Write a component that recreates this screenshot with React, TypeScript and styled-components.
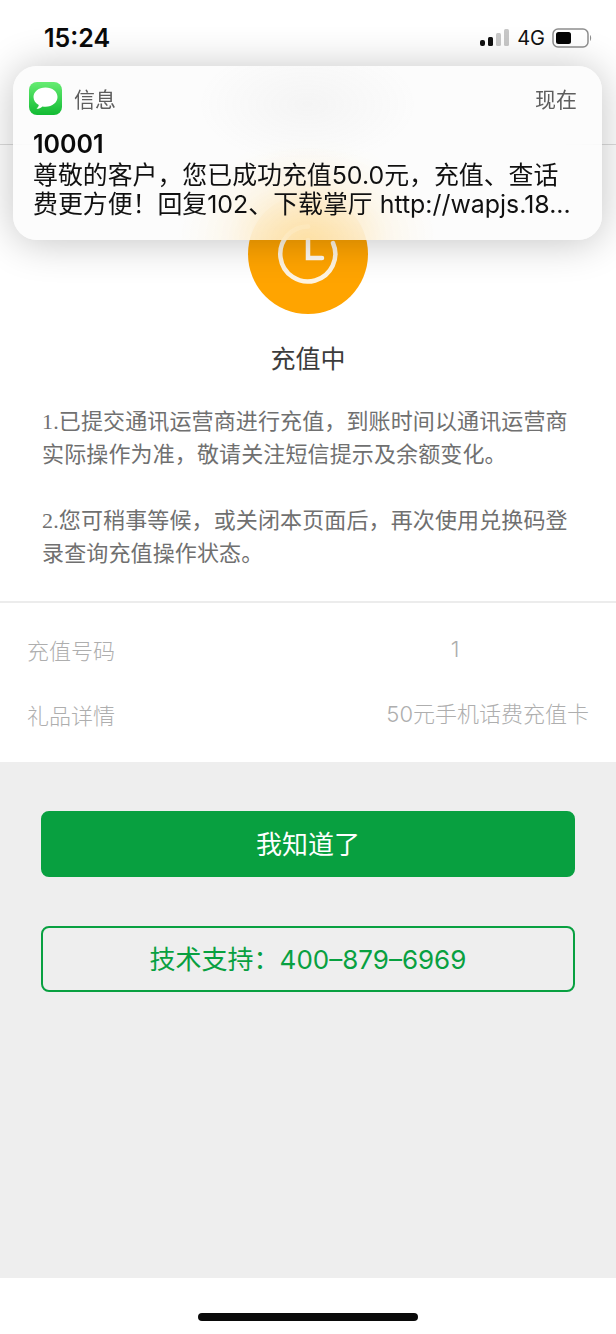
import React from 'react';
import styled, { createGlobalStyle } from 'styled-components';

const GlobalStyle = createGlobalStyle`
  html, body {
    margin: 0;
    padding: 0;
    background: #fff;
  }
  * {
    box-sizing: border-box;
  }
`;

const SANS = '"Liberation Sans", "Noto Sans CJK SC", sans-serif';
const UI = 'Inter, "Noto Sans CJK SC", sans-serif';
const GREEN = '#08a040';

const Page = styled.div`
  position: relative;
  width: 616px;
  height: 1334px;
  display: flex;
  flex-direction: column;
  overflow: hidden;
  background: #fff;
  font-family: ${SANS};
`;

const Header = styled.header`
  height: 145px;
  flex: none;
  border-bottom: 1px solid #dcdcdc;
  background: #fff;
`;

const StatusBar = styled.div`
  display: flex;
  justify-content: space-between;
  align-items: center;
  height: 76px;
  padding: 0 24px 0 44px;
`;

const Time = styled.span`
  font-family: ${UI};
  font-size: 25px;
  font-weight: 600;
  color: #0a0a0a;
`;

const StatusIcons = styled.div`
  display: flex;
  align-items: center;
  gap: 7px;
`;

const NetworkLabel = styled.span`
  font-family: ${UI};
  font-size: 20px;
  color: #111;
`;

const Result = styled.section`
  flex: none;
  height: 617px;
  background: #fff;
  display: flex;
  flex-direction: column;
`;

const StatusBlock = styled.div`
  height: 458px;
  padding-top: 49px;
  display: flex;
  flex-direction: column;
  align-items: center;
  border-bottom: 2px solid #ececec;
`;

const ClockBadge = styled.div`
  width: 120px;
  height: 120px;
  flex: none;
  border-radius: 50%;
  background: #ffa400;
  display: flex;
  align-items: center;
  justify-content: center;
`;

const Heading = styled.h1`
  margin: 25px 0 0;
  font-size: 25px;
  line-height: 40px;
  font-weight: 400;
  color: #3c3c3c;
`;

const Notes = styled.div`
  width: 100%;
  margin-top: 26px;
  padding: 0 42px;
  font-family: "Liberation Serif", "Noto Sans CJK SC", serif;
  font-size: 22px;
  line-height: 33px;
  letter-spacing: 0.13px;
  color: #707070;
`;

const Note = styled.p`
  margin: 0 0 33px;
`;

const Details = styled.div`
  display: grid;
  grid-template-columns: 294px 268px;
  grid-auto-rows: 65px;
  padding: 13px 27px 0;
  font-family: ${UI};
  font-size: 22px;
  font-weight: 300;
  color: #aeaeae;
`;

const DetailLabel = styled.span`
  display: flex;
  align-items: center;
`;

const DetailValue = styled.span<{ $align: 'center' | 'right' }>`
  align-self: center;
  line-height: 30px;
  text-align: ${(p) => p.$align};
`;

const Actions = styled.section`
  flex: 1;
  background: #eee;
  padding: 49px 41px 0;
  display: flex;
  flex-direction: column;
  gap: 49px;
`;

const ActionButton = styled.button<{ $outline?: boolean }>`
  height: 66px;
  border-radius: 8px;
  border: 2px solid ${GREEN};
  background: ${(p) => (p.$outline ? 'transparent' : GREEN)};
  color: ${(p) => (p.$outline ? GREEN : '#fff')};
  font-family: ${UI};
  font-size: 26px;
  padding: 0 0 4px;
`;

const HomeBar = styled.div`
  height: 56px;
  flex: none;
  background: #fff;
  display: flex;
  justify-content: center;
  padding-top: 35px;
`;

const HomeIndicator = styled.div`
  width: 220px;
  height: 8px;
  border-radius: 4px;
  background: #0a0a0a;
`;

const Banner = styled.div`
  position: absolute;
  left: 13px;
  top: 66px;
  width: 589px;
  height: 174px;
  padding: 15px 20px 0 20px;
  border-radius: 24px;
  background:
    radial-gradient(ellipse 130px 95px at 50% 100%, rgba(255, 208, 110, 0.42), rgba(255, 220, 150, 0.12) 62%, transparent),
    radial-gradient(ellipse 110px 60px at 50% 22%, rgba(225, 225, 225, 0.28), transparent),
    rgba(251, 251, 251, 0.8);
  -webkit-backdrop-filter: blur(30px);
  backdrop-filter: blur(30px);
  box-shadow: 0 2px 40px rgba(0, 0, 0, 0.24);
  font-family: ${UI};
`;

const BannerTop = styled.div`
  display: flex;
  align-items: center;
  height: 34px;
  margin-left: -4px;
`;

const AppName = styled.span`
  margin-left: 12px;
  flex: 1;
  font-size: 21px;
  color: #5e5e5e;
`;

const BannerTime = styled.span`
  margin-right: 5px;
  font-size: 21px;
  color: #5e5e5e;
`;

const Sender = styled.div`
  margin-top: 14px;
  font-size: 25px;
  line-height: 30px;
  font-weight: 600;
  color: #0a0a0a;
`;

const Message = styled.div`
  margin-top: 2px;
  font-size: 24.9px;
  line-height: 29px;
  color: #111;
  width: 545px;
`;

const SignalBars = () => (
  <svg width="30" height="20" viewBox="0 0 30 20">
    <rect x="0" y="12" width="5" height="6" rx="2" fill="#111" />
    <rect x="8" y="9" width="5" height="9" rx="1.5" fill="#111" />
    <rect x="16" y="5" width="5" height="13" rx="1.5" fill="#c8c8c8" />
    <rect x="24" y="1" width="5" height="17" rx="1.5" fill="#c8c8c8" />
  </svg>
);

const Battery = () => (
  <svg width="40" height="20" viewBox="0 0 40 20">
    <rect x="1" y="1" width="35" height="18" rx="5" fill="none" stroke="#8e8e8e" strokeWidth="1.5" />
    <rect x="4" y="4" width="15" height="12" rx="2.5" fill="#050505" />
    <path d="M38 7 C39.5 8 39.5 12 38 13 Z" fill="#8e8e8e" />
  </svg>
);

const MessagesIcon = () => (
  <svg width="33" height="33" viewBox="0 0 33 33">
    <defs>
      <linearGradient id="msgGreen" x1="0" y1="0" x2="0" y2="1">
        <stop offset="0" stopColor="#66ec72" />
        <stop offset="1" stopColor="#12bb33" />
      </linearGradient>
    </defs>
    <rect width="33" height="33" rx="8" fill="url(#msgGreen)" />
    <path
      d="M16.5 5.5C9.6 5.5 4.5 9.7 4.5 15c0 3.4 2.1 6.3 5.3 8 -.3 1.6-1.2 2.8-2.3 3.7 2.3 0 4.4-.9 5.9-2.3 1 .2 2 .3 3.1.3 6.9 0 12-4.3 12-9.7S23.4 5.5 16.5 5.5Z"
      fill="#fff"
    />
  </svg>
);

const ClockIcon = () => (
  <svg width="64" height="64" viewBox="0 0 64 64" fill="none" stroke="#fff" strokeLinecap="round">
    <path d="M57 21 A27.5 27.5 0 1 1 32 4.5" strokeWidth="4.5" opacity="0.88" />
    <path d="M32 18 V36 H46" strokeWidth="4.5" opacity="0.95" />
  </svg>
);

const App: React.FC = () => {
  return (
    <Page>
      <GlobalStyle />
      <Header>
        <StatusBar>
          <Time>15:24</Time>
          <StatusIcons>
            <SignalBars />
            <NetworkLabel>4G</NetworkLabel>
            <Battery />
          </StatusIcons>
        </StatusBar>
      </Header>

      <Result>
        <StatusBlock>
          <ClockBadge>
            <ClockIcon />
          </ClockBadge>
          <Heading>充值中</Heading>
          <Notes>
            <Note>1.已提交通讯运营商进行充值，到账时间以通讯运营商实际操作为准，敬请关注短信提示及余额变化。</Note>
            <Note>2.您可稍事等候，或关闭本页面后，再次使用兑换码登录查询充值操作状态。</Note>
          </Notes>
        </StatusBlock>
        <Details>
          <DetailLabel>充值号码</DetailLabel>
          <DetailValue $align="center">1</DetailValue>
          <DetailLabel>礼品详情</DetailLabel>
          <DetailValue $align="right">50元手机话费充值卡</DetailValue>
        </Details>
      </Result>

      <Actions>
        <ActionButton>我知道了</ActionButton>
        <ActionButton $outline>技术支持：400–879–6969</ActionButton>
      </Actions>

      <HomeBar>
        <HomeIndicator />
      </HomeBar>

      <Banner>
        <BannerTop>
          <MessagesIcon />
          <AppName>信息</AppName>
          <BannerTime>现在</BannerTime>
        </BannerTop>
        <Sender>10001</Sender>
        <Message>尊敬的客户，您已成功充值50.0元，充值、查话费更方便！回复102、下载掌厅 http://wapjs.18...</Message>
      </Banner>
    </Page>
  );
};

export default App;
